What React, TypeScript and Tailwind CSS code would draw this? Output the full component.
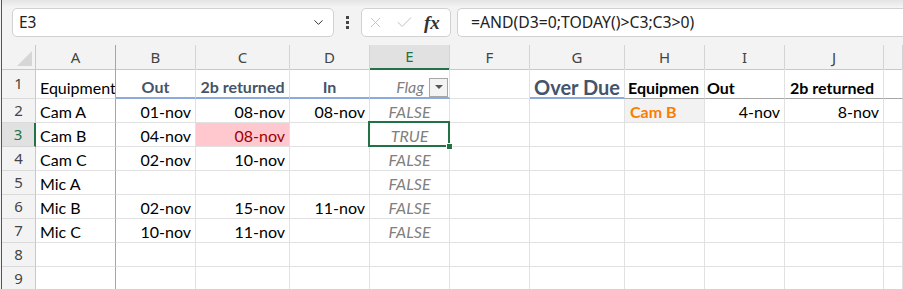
import { ChevronDown, X, Check } from 'lucide-react'

const GRID = 'grid grid-cols-[34px_80px_80px_94px_80px_80px_80px_95px_80px_80px_99px_1fr]'
const LETTERS = ['A', 'B', 'C', 'D', 'E', 'F', 'G', 'H', 'I', 'J', '']

const DATA = [
  ['Cam A', '01-nov', '08-nov', '08-nov', 'FALSE'],
  ['Cam B', '04-nov', '08-nov', '', 'TRUE'],
  ['Cam C', '02-nov', '10-nov', '', 'FALSE'],
  ['Mic A', '', '', '', 'FALSE'],
  ['Mic B', '02-nov', '15-nov', '11-nov', 'FALSE'],
  ['Mic C', '10-nov', '11-nov', '', 'FALSE'],
  ['', '', '', '', ''],
  ['', '', '', '', ''],
]

function Cell({ children, className = '' }: { children?: React.ReactNode; className?: string }) {
  return (
    <div
      className={`flex items-end px-[4px] border-r border-b border-[#e1e1e1] whitespace-nowrap overflow-hidden text-[16px] leading-[20px] ${className}`}
    >
      {children}
    </div>
  )
}

function RowHead({ n, active = false }: { n: number; active?: boolean }) {
  return (
    <div
      className={`flex items-center justify-center border-b text-[15px] font-['Noto_Sans',sans-serif] ${
        active
          ? 'bg-[#e1e1e1] text-[#217346] border-r-2 border-r-[#217346] border-b-[#d4d4d4]'
          : 'bg-[#f3f3f3] text-[#444] border-r border-r-[#c8c8c8] border-b-[#dadada]'
      }`}
    >
      {n}
    </div>
  )
}

export default function App() {
  return (
    <div className="w-[903px] h-[289px] overflow-hidden bg-white text-black flex font-['Lato',sans-serif]">
      <div className="w-[1px] bg-[#f3f3f3]" />
      <div className="w-[1px] bg-[#217346]" />
      <div className="flex-1 flex flex-col min-w-0">
        {/* formula bar */}
        <div className="h-[45px] flex-shrink-0 flex items-start pt-[8px] bg-[linear-gradient(#e4e4e4,#f3f3f3_7px)] font-['Noto_Sans',sans-serif]">
          <div className="ml-[10px] w-[322px] h-[29px] flex items-center justify-between bg-white border border-[#d1d1d1] rounded-[5px] pl-[6px] pr-[7px]">
            <span className="text-[15.5px] text-[#222]">E3</span>
            <ChevronDown size={15} strokeWidth={1.6} className="text-[#333]" />
          </div>
          <div className="w-[27px] h-[29px] flex flex-col items-center justify-center gap-[2px]">
            <span className="w-[3px] h-[3px] bg-[#444]" />
            <span className="w-[3px] h-[3px] bg-[#444]" />
            <span className="w-[3px] h-[3px] bg-[#444]" />
          </div>
          <div className="w-[90px] h-[29px] flex items-center bg-white border border-[#d1d1d1] rounded-[5px] pl-[5px]">
            <X size={17} strokeWidth={1.2} className="text-[#bdbdbd]" />
            <Check size={19} strokeWidth={1.2} className="ml-[11px] text-[#bdbdbd]" />
            <span className="ml-[10px] text-[19px] italic font-bold text-[#333] font-['Liberation_Serif',serif] leading-none">
              fx
            </span>
          </div>
          <div className="ml-[6px] flex-1 h-[29px] flex items-center bg-white border border-r-0 border-[#d1d1d1] rounded-l-[5px] pl-[13px]">
            <span className="text-[15.75px] text-[#222]">=AND(D3=0;TODAY()&gt;C3;C3&gt;0)</span>
          </div>
        </div>

        {/* column headers */}
        <div className={`${GRID} h-[24px] flex-shrink-0 bg-[#f3f3f3] font-['Noto_Sans',sans-serif]`}>
          <div className="relative border-r border-b border-[#c8c8c8]">
            <svg className="absolute right-[3px] bottom-[3px]" width="15" height="15">
              <polygon points="15,0 15,15 0,15" fill="#d6d6d6" />
            </svg>
          </div>
          {LETTERS.map((l, i) => (
            <div
              key={i}
              className={`flex items-center justify-center text-[15px] border-r ${
                l === 'E'
                  ? 'bg-[#e1e1e1] text-[#217346] border-b-2 border-b-[#217346] border-r-[#d4d4d4]'
                  : l === 'A'
                    ? 'text-[#444] border-b border-b-[#c8c8c8] border-r-[#a6a6a6]'
                    : 'text-[#444] border-b border-b-[#c8c8c8] border-r-[#d4d4d4]'
              }`}
            >
              {l}
            </div>
          ))}
        </div>

        {/* row 1 */}
        <div className={`${GRID} h-[30px] flex-shrink-0`}>
          <RowHead n={1} />
          <Cell className="items-center border-r-[#a6a6a6]">Equipment</Cell>
          <Cell className="items-center justify-center font-bold text-[#44546a] border-b-2 border-b-[#8ea9db]">Out</Cell>
          <Cell className="items-center justify-center font-bold text-[#44546a] border-b-2 border-b-[#8ea9db]">2b returned</Cell>
          <Cell className="items-center justify-center font-bold text-[#44546a] border-b-2 border-b-[#8ea9db]">In</Cell>
          <Cell className="items-center justify-end pr-[1px] border-b-2 border-b-[#8ea9db]">
            <span className="italic text-[#7f7f7f] mr-[5px]">Flag</span>
            <span className="w-[19px] h-[19px] flex items-center justify-center bg-[#f3f3f3] border border-[#a6a6a6]">
              <svg width="8" height="5">
                <polygon points="0,0 8,0 4,4" fill="#555" />
              </svg>
            </span>
          </Cell>
          <Cell />
          <Cell className="items-center text-[20px] font-bold text-[#44546a] border-b-2 border-b-[#8ea9db]">Over Due</Cell>
          <Cell className="items-center font-bold border-b-[#a6a6a6] pl-[3px]">Equipmen</Cell>
          <Cell className="items-center font-bold border-b-[#a6a6a6] pl-[2px]">Out</Cell>
          <Cell className="items-center font-bold border-b-[#a6a6a6] pl-[5px]">2b returned</Cell>
          <Cell className="border-b-[#a6a6a6]" />
        </div>

        {/* data rows */}
        {DATA.map((r, i) => {
          const n = i + 2
          const sel = n === 3
          return (
            <div key={n} className={`${GRID} h-[24px] flex-shrink-0`}>
              <RowHead n={n} active={sel} />
              <Cell className="border-r-[#a6a6a6]">{r[0]}</Cell>
              <Cell className="justify-end">{r[1]}</Cell>
              <Cell className={`justify-end ${sel ? 'bg-[#ffc7ce] text-[#9c0006]' : ''}`}>{r[2]}</Cell>
              <Cell className="justify-end">{r[3]}</Cell>
              <Cell className={`justify-center italic text-[#7f7f7f] ${sel ? 'relative overflow-visible z-10' : ''}`}>
                {r[4]}
                {sel && (
                  <>
                    <span className="absolute -top-[2px] -left-[2px] -right-[1px] -bottom-[1px] border-2 border-[#217346]" />
                    <span className="absolute -right-[4px] -bottom-[4px] w-[7px] h-[7px] bg-[#217346] border border-white" />
                  </>
                )}
              </Cell>
              <Cell />
              <Cell />
              {n === 2 ? (
                <>
                  <Cell className="bg-[#f2f2f2] font-bold text-[#fa7d00] border-l border-[#7f7f7f] -ml-[1px] pl-[5px]">Cam B</Cell>
                  <Cell className="justify-end">4-nov</Cell>
                  <Cell className="justify-end">8-nov</Cell>
                </>
              ) : (
                <>
                  <Cell />
                  <Cell />
                  <Cell />
                </>
              )}
              <Cell />
            </div>
          )
        })}
      </div>
    </div>
  )
}
